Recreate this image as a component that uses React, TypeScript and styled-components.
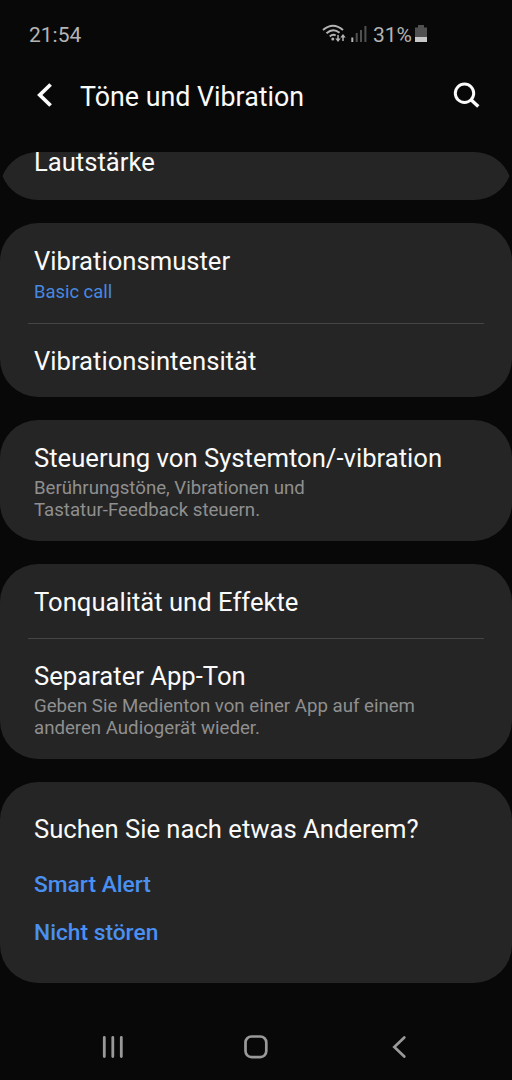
import React from 'react';
import styled, { createGlobalStyle } from 'styled-components';

const Global = createGlobalStyle`
  * { box-sizing: border-box; }
  body { margin: 0; background: #080808; font-family: Roboto, sans-serif; color: #fafafa; }
`;
const Screen = styled.div`
  width: 512px; height: 1080px; display: flex; flex-direction: column; overflow: hidden; background: #080808;
`;
const StatusBar = styled.div`
  height: 56px; padding: 23px 85px 0 29px; display: flex; justify-content: space-between;
  font-size: 21px; line-height: 24px; color: #b4b4b4;
`;
const StatusIcons = styled.div`display: flex; align-items: flex-start;`;
const Percent = styled.span`margin: 0 3px 0 6px; font-size: 21px;`;
const Header = styled.header`
  height: 96px; padding: 24px 31px 0 36px; display: flex; align-items: flex-start;
`;
const Title = styled.h1`
  margin: 0 auto 0 27px; font-weight: 400; font-size: 26.8px; line-height: 34px;
`;
const Scroll = styled.main`flex: 1; display: flex; flex-direction: column; gap: 23px;`;
const ScrolledCard = styled.section`
  height: 48px; padding: 0 34px; display: flex; align-items: flex-start; background: #252525; flex: none;
  clip-path: path('M38 0H474A38 38 0 0 1 509.500 24A38 38 0 0 1 474 48H38A38 38 0 0 1 2.500 24A38 38 0 0 1 38 0Z');
`;
const Card = styled.section<{ $h: number }>`
  height: ${p => p.$h}px; border-radius: 38px; background: #252525; flex: none;
`;
const Row = styled.div<{ $h: number; $top: number }>`
  height: ${p => p.$h}px; padding: ${p => p.$top}px 34px 0;
`;
const Divider = styled.div`height: 1px; margin: 0 28px; background: #454545;`;
const Label = styled.div`font-size: 25.63px; line-height: 32px; white-space: nowrap;`;
const ScrolledLabel = styled(Label)`line-height: 20px;`;
const Sub = styled.div<{ $blue?: boolean }>`
  font-size: ${p => (p.$blue ? 18.4 : 18.65)}px; line-height: 21.5px; margin-top: 4px;
  color: ${p => (p.$blue ? '#4789e0' : '#8f8f8f')}; white-space: nowrap;
`;
const Links = styled.div`margin-top: 16px; display: flex; flex-direction: column;`;
const Link = styled.a`font-size: 22.75px; font-weight: 500; line-height: 48px; color: #4a90f2;`;
const Nav = styled.nav`
  height: 68px; padding: 1px 101px 0; display: flex; align-items: center; justify-content: space-between;
`;

export default function App() {
  return (
    <Screen>
      <Global />
      <StatusBar>
        <span>21:54</span>
        <StatusIcons>
          <svg width="45" height="22" viewBox="0 0 45 22" fill="none" stroke="#b4b4b4" strokeWidth="2">
            <path d="M1 7Q11-1.500 21 7M4.500 10.300Q11 4.600 17.500 9.800M7.800 13.400Q11 10.500 13.700 12.500" />
            <circle cx="10.800" cy="16" r="1.500" fill="#b4b4b4" stroke="none" />
            <path d="M16 12v5M21 18v-5" strokeWidth="1.500" />
            <path d="M13.300 15.500h5.400L16 19zM18.300 14.500h5.400L21 11z" fill="#b4b4b4" stroke="none" />
            <path d="M30.300 19v-4.500" />
            <path d="M34.700 19v-9M39 19V7M43.400 19V3" stroke="#505050" />
          </svg>
          <Percent>31%</Percent>
          <svg width="12" height="22"><path d="M0 4.500h3V2h6v2.500h3V19H0z" fill="#505050" /><path d="M0 14h12v5H0z" fill="#c8c8c8" /></svg>
        </StatusIcons>
      </StatusBar>
      <Header>
        <svg width="17" height="30" viewBox="0 0 17 30" fill="none" stroke="#fafafa" strokeWidth="3.800"><path d="M14.600 4.500L3.800 15L14.600 25.500" /></svg>
        <Title>Töne und Vibration</Title>
        <svg width="28" height="30" viewBox="0 0 28 30" fill="none" stroke="#fafafa" strokeWidth="3"><circle cx="11.500" cy="13.300" r="9.200" /><path d="M18 19.800L25.300 26.600" strokeWidth="3.400" /></svg>
      </Header>
      <Scroll>
        <ScrolledCard><ScrolledLabel>Lautstärke</ScrolledLabel></ScrolledCard>
        <Card $h={174}>
          <Row $h={100} $top={22}><Label>Vibrationsmuster</Label><Sub $blue>Basic call</Sub></Row>
          <Divider />
          <Row $h={73} $top={21}><Label>Vibrationsintensität</Label></Row>
        </Card>
        <Card $h={121}>
          <Row $h={121} $top={22}><Label>Steuerung von Systemton/-vibration</Label><Sub>Berührungstöne, Vibrationen und<br />Tastatur-Feedback steuern.</Sub></Row>
        </Card>
        <Card $h={195}>
          <Row $h={74} $top={22}><Label>Tonqualität und Effekte</Label></Row>
          <Divider />
          <Row $h={120} $top={21}><Label>Separater App-Ton</Label><Sub>Geben Sie Medienton von einer App auf einem<br />anderen Audiogerät wieder.</Sub></Row>
        </Card>
        <Card $h={201}>
          <Row $h={201} $top={31}>
            <Label>Suchen Sie nach etwas Anderem?</Label>
            <Links><Link>Smart Alert</Link><Link>Nicht stören</Link></Links>
          </Row>
        </Card>
      </Scroll>
      <Nav>
        <svg width="24" height="24" stroke="#999" strokeWidth="2.800" strokeLinecap="round"><path d="M3.300 2.500v19M11.800 2.500v19M20.300 2.500v19" /></svg>
        <svg width="24" height="24" fill="none" stroke="#999" strokeWidth="2.700"><rect x="1.500" y="1.500" width="20.800" height="20.600" rx="6" /></svg>
        <svg width="24" height="24" fill="none" stroke="#999" strokeWidth="2.700" strokeLinecap="round"><path d="M17.300 2.500L7.300 12L17.300 21.500" /></svg>
      </Nav>
    </Screen>
  );
}
